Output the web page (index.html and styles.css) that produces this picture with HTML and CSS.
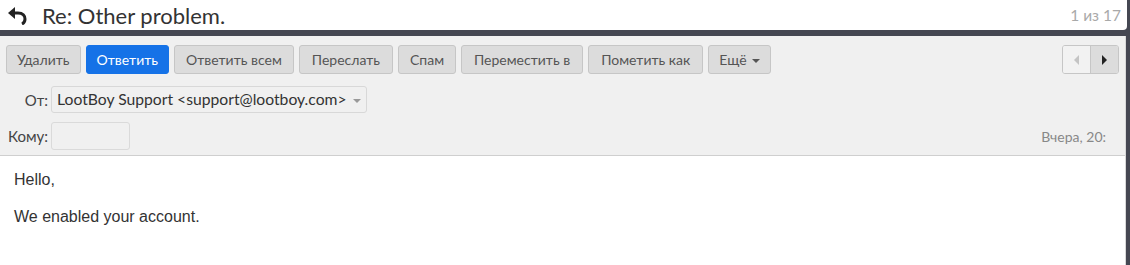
FILE: index.html
```html
<!DOCTYPE html>
<html>
<head>
<meta charset="utf-8">
<link rel="stylesheet" href="styles.css">
</head>
<body>
<div class="header">
  <svg class="back" width="20" height="18" viewBox="0 0 20 18">
    <polygon points="0,6 7,0 7,12" fill="#222"/>
    <path d="M6 6 H10 C15 6 17 9 17 12 C17 14 16 16 14 17" fill="none" stroke="#222" stroke-width="3"/>
  </svg>
  <div class="title">Re: Other problem.</div>
  <div class="count">1 из 17</div>
</div>
<div class="main">
  <div class="panel">
    <div class="toolbar">
      <div class="btn narrow">Удалить</div>
      <div class="btn primary narrow">Ответить</div>
      <div class="btn mid">Ответить всем</div>
      <div class="btn">Переслать</div>
      <div class="btn mid">Спам</div>
      <div class="btn">Переместить в</div>
      <div class="btn">Пометить как</div>
      <div class="btn narrow">Ещё <span class="caret"></span></div>
      <div class="pager">
        <div class="pg disabled"><span class="tri-left"></span></div>
        <div class="pg active"><span class="tri-right"></span></div>
      </div>
    </div>
    <div class="row from">
      <div class="label">От:</div>
      <div class="select">LootBoy Support &lt;support@lootboy.com&gt; <span class="caret light"></span></div>
    </div>
    <div class="row to">
      <div class="label">Кому:</div>
      <div class="tobox"></div>
      <div class="date">Вчера, 20:</div>
    </div>
  </div>
  <div class="content">
    <p>Hello,</p>
    <p>We enabled your account.</p>
  </div>
</div>
</body>
</html>
```
FILE: styles.css
```css
html, body {
  margin: 0;
  padding: 0;
  height: 265px;
  overflow: hidden;
}
body {
  background: #454752;
  font-family: Lato, "Noto Sans", sans-serif;
  color: #333;
}
.header {
  height: 30px;
  background: #fff;
  margin-right: 3px;
  border-radius: 0 0 4px 0;
  display: flex;
  align-items: center;
  padding: 0 6px 0 6px;
  box-sizing: border-box;
}
.back {
  margin: 2px 0 0 2px;
}
.title {
  margin-left: 14px;
  font-size: 22px;
  color: #333;
  flex: 1;
}
.count {
  font-size: 15.5px;
  color: #a9a9a9;
}
.main {
  margin-top: 6px;
  margin-right: 4px;
  background: #fff;
  height: 229px;
  border-right: 1px solid #d8d8d8;
}
.panel {
  background: #f0f0f0;
  border-bottom: 1px solid #cfcfcf;
  height: 120px;
  box-sizing: border-box;
  padding: 9px 0 0 6px;
}
.toolbar {
  display: flex;
  gap: 5px;
  align-items: center;
  padding-right: 6px;
}
.btn {
  height: 29px;
  box-sizing: border-box;
  border: 1px solid #c6c6c6;
  border-radius: 3px;
  background: #dcdcdc;
  color: #555;
  font-size: 14px;
  line-height: 27px;
  padding: 0 12px;
  white-space: nowrap;
}
.btn.narrow {
  padding: 0 10px;
}
.btn.mid {
  padding: 0 11px;
}
.btn.primary {
  background: #1572e7;
  border-color: #1572e7;
  color: #fff;
}
.caret {
  display: inline-block;
  width: 0;
  height: 0;
  border-left: 4px solid transparent;
  border-right: 4px solid transparent;
  border-top: 4px solid #555;
  vertical-align: middle;
  margin-left: 2px;
}
.caret.light {
  border-top-color: #999;
}
.pager {
  margin-left: auto;
  display: flex;
  height: 29px;
  border: 1px solid #c6c6c6;
  border-radius: 3px;
  box-sizing: border-box;
  overflow: hidden;
}
.pg {
  width: 27px;
  display: flex;
  align-items: center;
  justify-content: center;
}
.pg.disabled {
  background: #f2f2f2;
  border-right: 1px solid #c6c6c6;
}
.pg.active {
  background: #dcdcdc;
}
.tri-left {
  width: 0; height: 0;
  border-top: 5px solid transparent;
  border-bottom: 5px solid transparent;
  border-right: 5px solid #c4c4c4;
}
.tri-right {
  width: 0; height: 0;
  border-top: 5px solid transparent;
  border-bottom: 5px solid transparent;
  border-left: 5px solid #222;
}
.row {
  display: flex;
  align-items: center;
}
.label {
  width: 42px;
  text-align: right;
  font-size: 15px;
  color: #444;
  margin-right: 3px;
}
.from {
  margin-top: 12px;
}
.select {
  height: 27px;
  box-sizing: border-box;
  border: 1px solid #d8d8d8;
  border-radius: 3px;
  background: #f0f0f0;
  font-size: 15.7px;
  line-height: 25px;
  padding: 0 5px;
  color: #333;
  white-space: nowrap;
}
.to {
  margin-top: 9px;
  padding-right: 19px;
}
.tobox {
  width: 79px;
  height: 28px;
  box-sizing: border-box;
  border: 1px solid #dadada;
  border-radius: 3px;
}
.date {
  margin-left: auto;
  font-size: 14px;
  color: #888;
}
.content {
  padding: 14px 14px;
  font-family: "Liberation Sans", Arial, sans-serif;
  font-size: 16px;
  color: #333;
}
.content p {
  margin: 0 0 18px 0;
  line-height: 19px;
}
```
